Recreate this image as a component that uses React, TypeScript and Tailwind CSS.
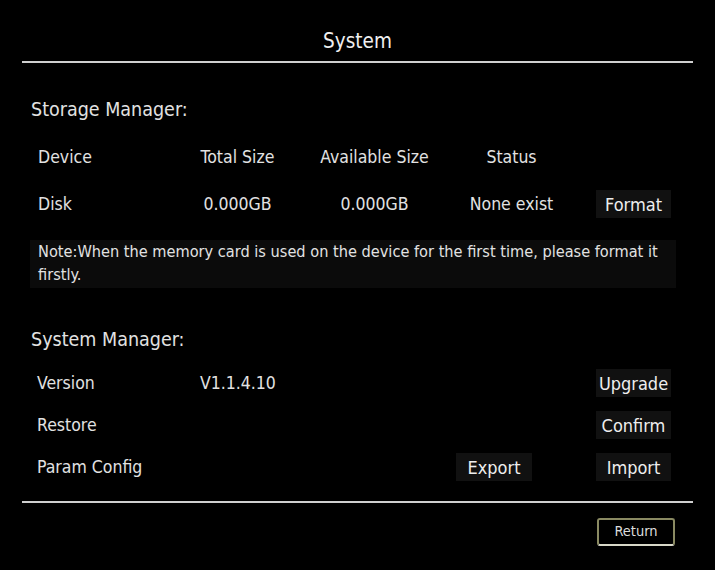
import React from 'react';

const font = { fontFamily: '"DejaVu Sans Condensed", "DejaVu Sans", sans-serif' };

function Btn({ label, className = '' }: { label: string; className?: string }) {
  return (
    <div className={`flex h-[28px] w-[75px] items-center justify-center bg-[#111111] text-[18px] text-[#eeeeee] ${className}`}>
      {label}
    </div>
  );
}

export default function App() {
  return (
    <div className="h-[570px] w-[715px] bg-black text-[17.5px] text-[#e2e2e2]" style={font}>
      {/* Title */}
      <div className="flex h-[61px] items-center justify-center pt-[22px] text-[20.5px] text-[#f0f0f0]">System</div>
      <div className="mx-[22px] h-[2px] bg-[#cfcfcf]" />

      {/* Storage */}
      <div className="flex h-[60px] items-end pl-[31px] text-[19.5px] leading-[26px]">Storage Manager:</div>

      <div className="mt-[19px] flex h-[30px] items-center pl-[38px]">
        <div className="w-[140px]">Device</div>
        <div className="w-[119px] text-center">Total Size</div>
        <div className="w-[155px] text-center">Available Size</div>
        <div className="w-[119px] text-center">Status</div>
      </div>
      <div className="mt-[17px] flex h-[30px] items-center pl-[38px]">
        <div className="w-[140px]">Disk</div>
        <div className="w-[119px] text-center">0.000GB</div>
        <div className="w-[155px] text-center">0.000GB</div>
        <div className="w-[119px] text-center">None exist</div>
        <div className="flex w-[125px] justify-center">
          <Btn label="Format" />
        </div>
      </div>

      <div className="ml-[30px] mt-[21px] h-[48px] w-[646px] bg-[#0b0b0b] pl-[8px] pr-[2px] text-[16.2px] leading-[23px]">
        Note:When the memory card is used on the device for the first time, please format it firstly.
      </div>

      {/* System */}
      <div className="mt-[39px] flex h-[26px] items-center pl-[31px] text-[19.5px]">System Manager:</div>

      <div className="mt-[16px] flex h-[28px] items-center pl-[37px] pr-[44px]">
        <div className="w-[163px]">Version</div>
        <div className="flex-1">V1.1.4.10</div>
        <Btn label="Upgrade" />
      </div>
      <div className="mt-[14px] flex h-[28px] items-center pl-[37px] pr-[44px]">
        <div className="flex-1">Restore</div>
        <Btn label="Confirm" />
      </div>
      <div className="mt-[14px] flex h-[28px] items-center pl-[37px] pr-[44px]">
        <div className="flex-1">Param Config</div>
        <Btn label="Export" className="mr-[64px] w-[76px]" />
        <Btn label="Import" />
      </div>

      <div className="mx-[22px] mt-[20px] h-[2px] bg-[#cfcfcf]" />

      <div className="flex justify-end pr-[40px] pt-[15px]">
        <div className="flex h-[28px] w-[78px] items-center justify-center rounded-[3px] border-2 border-[#8a8a62] border-b-[#d8d8c8] text-[14.5px] text-[#dddddd]">
          Return
        </div>
      </div>
    </div>
  );
}
